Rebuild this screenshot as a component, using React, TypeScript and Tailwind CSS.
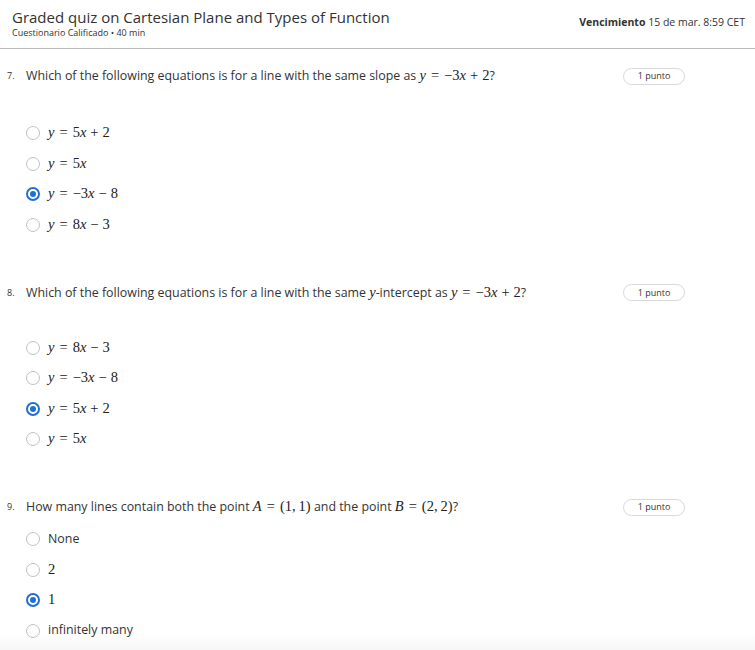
import { type ReactNode } from "react";

const MATH = "font-[family-name:'Liberation_Serif',serif]";

// renders a small math expression, KaTeX-ish: letters italic, spaced operators
function Eq({ s }: { s: string }) {
  const parts: ReactNode[] = [];
  Array.from(s).forEach((ch, i) => {
    if (ch === " ") return;
    if (/[a-zA-Z]/.test(ch)) {
      parts.push(
        <i key={i} className="italic">
          {ch}
        </i>,
      );
    } else if (ch === "=") {
      parts.push(
        <span key={i} className="mx-[5px]">
          =
        </span>,
      );
    } else if (ch === "+" || ch === "−") {
      // binary vs unary minus
      const prev = s.slice(0, i).trim().slice(-1);
      const unary = prev === "=" || prev === "";
      parts.push(
        <span key={i} className={unary ? "" : "mx-[4px]"}>
          {ch}
        </span>,
      );
    } else if (ch === ",") {
      parts.push(
        <span key={i} className="mr-[3px]">
          ,
        </span>,
      );
    } else {
      parts.push(<span key={i}>{ch}</span>);
    }
  });
  return <span className={`${MATH} text-[14.5px] text-[#222]`}>{parts}</span>;
}

type Option = { label: ReactNode; selected?: boolean };

type Question = {
  num: number;
  text: ReactNode;
  options: Option[];
  gap: string;
};

const QUESTIONS: Question[] = [
  {
    num: 7,
    gap: "mt-[37px]",
    text: (
      <>
        Which of the following equations is for a line with the same slope as{" "}
        <Eq s="y = −3x + 2" />?
      </>
    ),
    options: [
      { label: <Eq s="y = 5x + 2" /> },
      { label: <Eq s="y = 5x" /> },
      { label: <Eq s="y = −3x − 8" />, selected: true },
      { label: <Eq s="y = 8x − 3" /> },
    ],
  },
  {
    num: 8,
    gap: "mt-[35px]",
    text: (
      <>
        Which of the following equations is for a line with the same{" "}
        <Eq s="y" />
        -intercept as <Eq s="y = −3x + 2" />?
      </>
    ),
    options: [
      { label: <Eq s="y = 8x − 3" /> },
      { label: <Eq s="y = −3x − 8" /> },
      { label: <Eq s="y = 5x + 2" />, selected: true },
      { label: <Eq s="y = 5x" /> },
    ],
  },
  {
    num: 9,
    gap: "mt-[12px]",
    text: (
      <>
        How many lines contain both the point <Eq s="A = (1, 1)" /> and the
        point <Eq s="B = (2, 2)" />?
      </>
    ),
    options: [
      { label: <span className="text-[12.4px] text-[#333]">None</span> },
      { label: <Eq s="2" /> },
      { label: <Eq s="1" />, selected: true },
      { label: <span className="text-[12.4px] text-[#333]">infinitely many</span> },
    ],
  },
];

function Radio({ selected }: { selected?: boolean }) {
  if (selected) {
    return (
      <span className="w-[14px] h-[14px] rounded-full border-2 border-[#1f6fd4] flex items-center justify-center shrink-0">
        <span className="w-[6px] h-[6px] rounded-full bg-[#1f6fd4]" />
      </span>
    );
  }
  return (
    <span className="w-[14px] h-[14px] rounded-full border-[1.5px] border-[#c2c2c2] shrink-0" />
  );
}

function QuestionBlock({ q }: { q: Question }) {
  return (
    <div className="pr-[70px]">
      <div className="flex items-center h-[20px]">
        <span className="w-[18px] pl-[7px] text-[9px] text-[#333] shrink-0">
          {q.num}.
        </span>
        <p className="flex-1 pl-[8px] text-[12.4px] text-[#333]">{q.text}</p>
        <span className="w-[62px] h-[17px] rounded-full border border-[#d9d9d9] text-[9px] text-[#333] flex items-center justify-center shrink-0">
          1 punto
        </span>
      </div>
      <div className={`flex flex-col gap-[10.5px] pl-[26px] ${q.gap}`}>
        {q.options.map((o, i) => (
          <div key={i} className="flex items-center gap-[8px] h-[20px]">
            <Radio selected={o.selected} />
            {o.label}
          </div>
        ))}
      </div>
    </div>
  );
}

export default function App() {
  return (
    <div className="font-['Open_Sans',sans-serif] w-[755px] h-[650px] bg-white overflow-hidden relative">
      <div className="absolute bottom-0 left-0 right-0 h-[16px] bg-gradient-to-b from-white to-[#f6f6f6]" />

      {/* Header */}
      <div className="relative flex items-start justify-between pl-[12px] pr-[10px] pt-[7px] h-[49px] border-b border-[#bcbcbc]">
        <div>
          <h1 className="text-[15px] leading-[20px] text-[#333]">
            Graded quiz on Cartesian Plane and Types of Function
          </h1>
          <p className="text-[9px] leading-[11px] text-[#333]">
            Cuestionario Calificado • 40 min
          </p>
        </div>
        <p className="text-[10.5px] text-[#333] mt-[8px]">
          <span className="font-bold">Vencimiento</span> 15 de mar. 8:59 CET
        </p>
      </div>

      <div className="relative flex flex-col gap-[48px] pt-[17px]">
        {QUESTIONS.map((q) => (
          <QuestionBlock key={q.num} q={q} />
        ))}
      </div>
    </div>
  );
}
